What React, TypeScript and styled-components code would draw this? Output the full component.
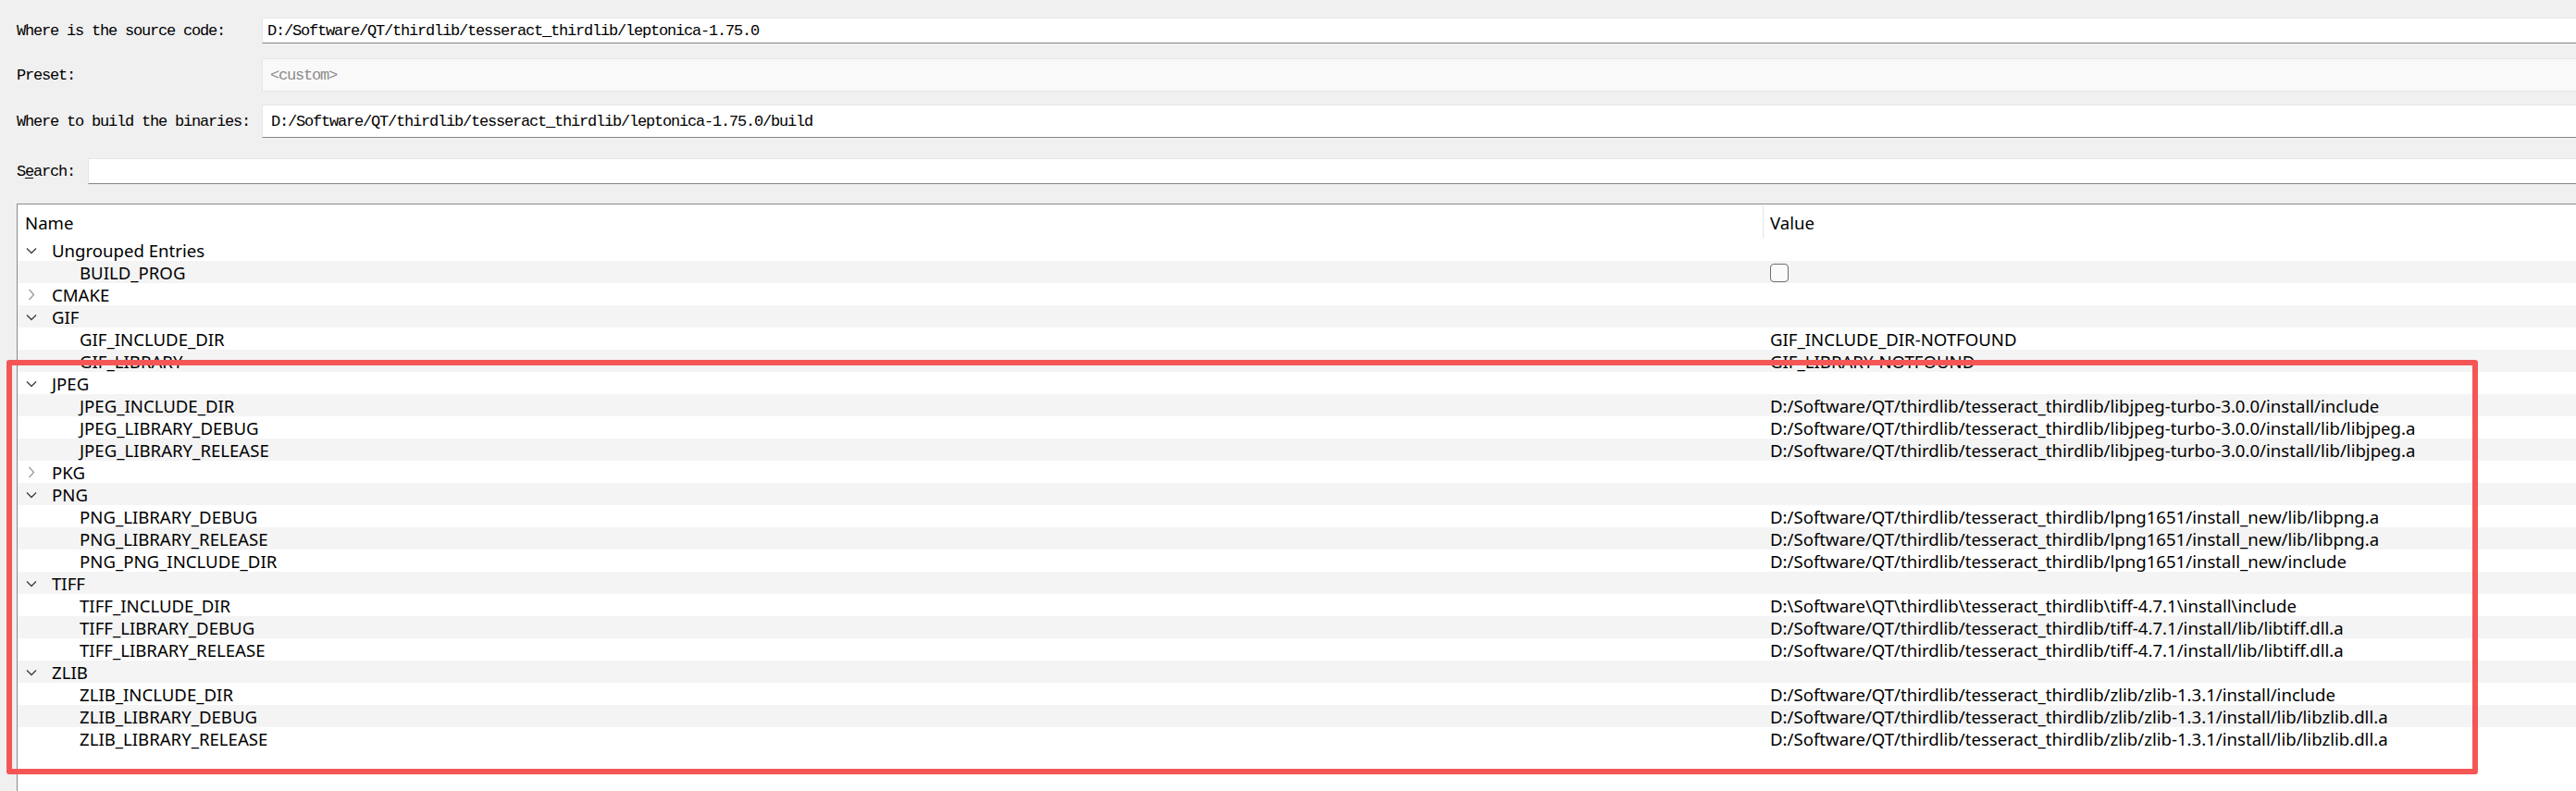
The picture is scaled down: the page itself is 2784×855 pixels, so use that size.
import React from "react";
import styled, { createGlobalStyle } from "styled-components";

const GlobalStyle = createGlobalStyle`
  html, body { margin: 0; padding: 0; background: #f0f0f0; overflow: hidden; }
  #root { width: 2784px; height: 855px; }
`;

const Window = styled.div`
  position: relative;
  width: 2784px;
  height: 855px;
  overflow: hidden;
  background: #f0f0f0;
  display: flex;
  flex-direction: column;
  padding-left: 18px;
  box-sizing: border-box;
`;

const FormRow = styled.div<{ $top: number; $labelWidth: number }>`
  display: grid;
  grid-template-columns: ${(p) => p.$labelWidth}px 1fr;
  align-items: center;
  margin-top: ${(p) => p.$top}px;
`;

const Label = styled.label`
  font-family: "Liberation Mono", monospace;
  font-size: 17px;
  letter-spacing: -1.2px;
  color: #000;
  white-space: nowrap;
`;

const Mnemonic = styled.span`
  text-decoration: underline;
  text-underline-offset: 2px;
`;

const Field = styled.div<{ $height: number; $pad: number; $disabled?: boolean }>`
  height: ${(p) => p.$height}px;
  box-sizing: border-box;
  display: flex;
  align-items: center;
  padding-left: ${(p) => p.$pad}px;
  background: ${(p) => (p.$disabled ? "#f9f9f9" : "#ffffff")};
  border: 1px solid #e6e6e6;
  border-right: none;
  border-bottom: 1px solid ${(p) => (p.$disabled ? "#e6e6e6" : "#868686")};
  font-family: "Liberation Mono", monospace;
  font-size: 17px;
  letter-spacing: -1.2px;
  color: ${(p) => (p.$disabled ? "#8c8c8c" : "#000")};
  white-space: nowrap;
`;

const Tree = styled.div`
  margin-top: 21px;
  flex: 1;
  background: #ffffff;
  border: 1px solid #8a8a8a;
  border-right: none;
  border-bottom: none;
  font-family: "Noto Sans", "Open Sans", sans-serif;
  font-size: 18.6px;
  color: #000;
`;

const HeaderRow = styled.div`
  display: grid;
  grid-template-columns: 1886px 1fr;
  height: 37px;
  align-items: stretch;
`;

const HeaderCell = styled.div<{ $divider?: boolean }>`
  display: flex;
  align-items: center;
  padding-left: ${(p) => (p.$divider ? 7 : 8)}px;
  border-left: ${(p) => (p.$divider ? "1px solid #e5e5e5" : "none")};
  margin-top: 1px;
  white-space: nowrap;
`;

const Row = styled.div<{ $alt: boolean }>`
  display: grid;
  grid-template-columns: 1886px 1fr;
  height: 24px;
  align-items: center;
  background: ${(p) => (p.$alt ? "#f4f4f4" : "#ffffff")};
  white-space: nowrap;
`;

const NameCell = styled.div<{ $indent: number }>`
  display: flex;
  align-items: center;
  padding-left: ${(p) => 9 + p.$indent}px;
`;

const ChevronSlot = styled.span`
  display: inline-flex;
  align-items: center;
  justify-content: center;
  width: 12px;
  height: 24px;
  margin-right: 16px;
`;

const ValueCell = styled.div`
  display: flex;
  align-items: center;
  padding-left: 8px;
`;

const CheckBox = styled.span`
  display: inline-block;
  width: 20px;
  height: 20px;
  box-sizing: border-box;
  border: 1px solid #6e6e6e;
  border-radius: 4px;
  background: #fbfbfb;
  margin-top: 1px;
`;

const Annotation = styled.div`
  position: absolute;
  left: 7px;
  top: 389px;
  width: 2671px;
  height: 448px;
  box-sizing: border-box;
  border: 6px solid #f45656;
  border-radius: 3px;
  pointer-events: none;
`;

const Chevron = ({ open }: { open: boolean }) =>
  open ? (
    <svg width="12" height="8" viewBox="0 0 12 8">
      <polyline points="1,1.5 6,6.5 11,1.5" fill="none" stroke="#3c3c3c" strokeWidth="1.3" />
    </svg>
  ) : (
    <svg width="8" height="13" viewBox="0 0 8 13">
      <polyline points="1.5,1 6.5,6.5 1.5,12" fill="none" stroke="#9a9a9a" strokeWidth="1.3" />
    </svg>
  );

type Entry = [string, string | null];
type Group = { name: string; open: boolean; items: Entry[] };

const JPEG = "D:/Software/QT/thirdlib/tesseract_thirdlib/libjpeg-turbo-3.0.0/install";
const PNG = "D:/Software/QT/thirdlib/tesseract_thirdlib/lpng1651/install_new";
const TIFF = "D:/Software/QT/thirdlib/tesseract_thirdlib/tiff-4.7.1/install";
const ZLIB = "D:/Software/QT/thirdlib/tesseract_thirdlib/zlib/zlib-1.3.1/install";

const groups: Group[] = [
  { name: "Ungrouped Entries", open: true, items: [["BUILD_PROG", null]] },
  { name: "CMAKE", open: false, items: [] },
  {
    name: "GIF",
    open: true,
    items: [
      ["GIF_INCLUDE_DIR", "GIF_INCLUDE_DIR-NOTFOUND"],
      ["GIF_LIBRARY", "GIF_LIBRARY-NOTFOUND"],
    ],
  },
  {
    name: "JPEG",
    open: true,
    items: [
      ["JPEG_INCLUDE_DIR", `${JPEG}/include`],
      ["JPEG_LIBRARY_DEBUG", `${JPEG}/lib/libjpeg.a`],
      ["JPEG_LIBRARY_RELEASE", `${JPEG}/lib/libjpeg.a`],
    ],
  },
  { name: "PKG", open: false, items: [] },
  {
    name: "PNG",
    open: true,
    items: [
      ["PNG_LIBRARY_DEBUG", `${PNG}/lib/libpng.a`],
      ["PNG_LIBRARY_RELEASE", `${PNG}/lib/libpng.a`],
      ["PNG_PNG_INCLUDE_DIR", `${PNG}/include`],
    ],
  },
  {
    name: "TIFF",
    open: true,
    items: [
      ["TIFF_INCLUDE_DIR", "D:\\Software\\QT\\thirdlib\\tesseract_thirdlib\\tiff-4.7.1\\install\\include"],
      ["TIFF_LIBRARY_DEBUG", `${TIFF}/lib/libtiff.dll.a`],
      ["TIFF_LIBRARY_RELEASE", `${TIFF}/lib/libtiff.dll.a`],
    ],
  },
  {
    name: "ZLIB",
    open: true,
    items: [
      ["ZLIB_INCLUDE_DIR", `${ZLIB}/include`],
      ["ZLIB_LIBRARY_DEBUG", `${ZLIB}/lib/libzlib.dll.a`],
      ["ZLIB_LIBRARY_RELEASE", `${ZLIB}/lib/libzlib.dll.a`],
    ],
  },
];

export default function App() {
  const rows: React.ReactNode[] = [];
  let i = 0;
  groups.forEach((g) => {
    rows.push(
      <Row key={g.name} $alt={i % 2 === 1}>
        <NameCell $indent={0}>
          <ChevronSlot>
            <Chevron open={g.open} />
          </ChevronSlot>
          {g.name}
        </NameCell>
        <ValueCell />
      </Row>
    );
    i++;
    if (g.open) {
      g.items.forEach(([n, v]) => {
        rows.push(
          <Row key={n} $alt={i % 2 === 1}>
            <NameCell $indent={30}>
              <ChevronSlot />
              {n}
            </NameCell>
            <ValueCell>{v === null ? <CheckBox /> : v}</ValueCell>
          </Row>
        );
        i++;
      });
    }
  });

  return (
    <>
      <GlobalStyle />
      <Window>
        <FormRow $top={19} $labelWidth={265}>
          <Label>Where is the source code:</Label>
          <Field $height={28} $pad={5}>
            D:/Software/QT/thirdlib/tesseract_thirdlib/leptonica-1.75.0
          </Field>
        </FormRow>
        <FormRow $top={16} $labelWidth={265}>
          <Label>Preset:</Label>
          <Field $height={36} $pad={8} $disabled>
            &lt;custom&gt;
          </Field>
        </FormRow>
        <FormRow $top={14} $labelWidth={265}>
          <Label>Where to build the binaries:</Label>
          <Field $height={36} $pad={9}>
            D:/Software/QT/thirdlib/tesseract_thirdlib/leptonica-1.75.0/build
          </Field>
        </FormRow>
        <FormRow $top={22} $labelWidth={77}>
          <Label>
            S<Mnemonic>e</Mnemonic>arch:
          </Label>
          <Field $height={28} $pad={5} />
        </FormRow>
        <Tree>
          <HeaderRow>
            <HeaderCell>Name</HeaderCell>
            <HeaderCell $divider>Value</HeaderCell>
          </HeaderRow>
          {rows}
        </Tree>
        <Annotation />
      </Window>
    </>
  );
}
